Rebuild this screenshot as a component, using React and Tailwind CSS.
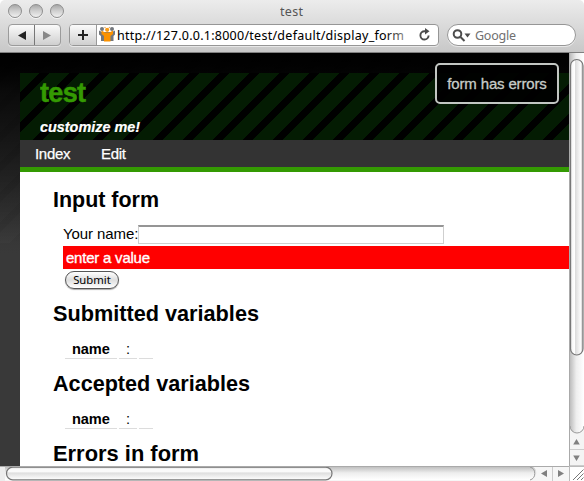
import React from "react";

const LUCIDA = "font-['Noto_Sans','Open_Sans',sans-serif]";

function TitleBar() {
  return (
    <header className={`h-[53px] shrink-0 rounded-t-[5px] border-b border-[#808080] bg-linear-to-b from-[#ececec] to-[#c8c8c8] ${LUCIDA}`}>
      <div className="flex h-6 items-center pl-2">
        <div className="flex w-14 gap-[7px] pt-px -mt-[3px]">
          {[0, 1, 2].map((i) => (
            <span key={i} className="h-[14px] w-[14px] rounded-full border border-[#8e8e8e] bg-linear-to-b from-[#a8a8a8] via-[#d0d0d0] to-[#f0f0f0] shadow-[0_1px_0_#f5f5f5]" />
          ))}
        </div>
        <svg className="ml-[216px] h-[22px] w-[40px]">
          <text x="0" y="15" fontSize="12.5" textLength="23" fill="#555">test</text>
        </svg>
      </div>
      <div className="flex h-[22px] pl-2">
        <div className="flex h-[22px] w-[53px] rounded-[4px] border border-[#9b9b9b] bg-linear-to-b from-[#fbfbfb] to-[#cfcfcf] shadow-[0_1px_0_#e8e8e8]">
          <svg width="51" height="20">
            <path d="M9 10.5 17 6v9z" fill="#222" />
            <path d="M42 10.500 34 6v9z" fill="#888" />
            <path d="M25.500 0v20" stroke="#777" />
          </svg>
        </div>
        <div className="ml-2 flex h-[22px] w-[370px] overflow-hidden rounded-[4px] border border-[#969696] bg-white shadow-[0_1px_0_#e8e8e8]">
          <div className="w-[27px] shrink-0 border-r border-[#999] bg-linear-to-b from-[#fbfbfb] to-[#cfcfcf]">
            <svg width="26" height="20">
              <path d="M8 10h10M13 5v10" stroke="#222" strokeWidth="2" />
            </svg>
          </div>
          <svg width="20" height="20" className="shrink-0">
            <g fill="#73777c">
              <circle cx="5" cy="4" r="2" />
              <circle cx="15" cy="4" r="2" />
              <path d="M2 5.500 5 7h10l3-1.500v4L16.500 11v5H4v-5L2 9.500z" />
            </g>
            <path d="M4.500 5.500 8 7.500h4.500L16 5.500v3.500L13.500 11v5.500H7V11L4.500 9z" fill="#fb9200" />
            <circle cx="10.200" cy="4.800" r="2.100" fill="#fb9a12" />
            <circle cx="8" cy="2.500" r=".8" fill="#e6b06a" />
            <circle cx="12.400" cy="2.500" r=".8" fill="#e6b06a" />
          </svg>
          <svg width="300" height="20" className="shrink-0">
            <defs>
              <linearGradient id="urlFade" gradientUnits="userSpaceOnUse" x1="268" x2="292" y1="0" y2="0">
                <stop offset="0" stopColor="#000" />
                <stop offset="1" stopColor="#aaa" />
              </linearGradient>
            </defs>
            <text x="0" y="14.500" fontSize="12.5" textLength="287" fill="url(#urlFade)">http://127.0.0.1:8000/test/default/display_form</text>
          </svg>
          <svg width="20" height="20" className="shrink-0">
            <path d="M9.600 6.300H7.500A4.100 4.100 0 1 0 11.600 10.500" fill="none" stroke="#4b4b4b" strokeWidth="1.900" />
            <path d="M8 3v6.500l4.500-3.300z" fill="#4b4b4b" />
          </svg>
        </div>
        <div className="ml-2 flex h-[22px] w-[129px] rounded-full border border-[#969696] bg-white shadow-[0_1px_0_#e8e8e8]">
          <svg width="120" height="20">
            <circle cx="9.500" cy="9" r="3.800" fill="none" stroke="#4d4d4d" strokeWidth="2" />
            <path d="m12.500 12 4 4" stroke="#4d4d4d" strokeWidth="2" />
            <path d="M16.500 8.500h6l-3 4z" fill="#4d4d4d" />
            <text x="27" y="14.500" fontSize="12.5" textLength="41" fill="#707070">Google</text>
          </svg>
        </div>
      </div>
    </header>
  );
}

function Heading({ children, width }) {
  return (
    <h2 className="h-[30px]">
      <svg width="300" height="30">
        <text x="0" y="21" fontSize="22.500" fontWeight="700" textLength={width} lengthAdjust="spacingAndGlyphs">{children}</text>
      </svg>
    </h2>
  );
}

function Variables() {
  return (
    <div className="mt-[6px] mb-[11px] ml-3 flex h-[23px] gap-[2px] text-[14.6px] leading-[26px]">
      <div className="w-[52px] border-b border-[#dcdcdc] pl-[7px] font-bold tracking-[-0.1px]">name</div>
      <div className="w-[18px] border-b border-[#dcdcdc] pl-[7px]">:</div>
      <div className="w-[14px] border-b border-[#dcdcdc]" />
    </div>
  );
}

function Page() {
  return (
    <main className="relative h-[413px] w-[569px] overflow-hidden bg-[#393939] bg-[linear-gradient(#000_0px,#000000b0_40px,#00000000_190px),repeating-linear-gradient(135deg,#ffffff04_0px,#ffffff04_14.142px,transparent_14.142px,transparent_21.213px),linear-gradient(#000_0px,#202020_40px,#2c2c2c_120px,#393939_200px)] bg-[length:100%_190px,100%_190px,100%_100%] bg-no-repeat pt-5 pl-5 font-['Liberation_Sans',Arial,sans-serif] text-black">
      <div className="h-[67px] bg-[repeating-linear-gradient(135deg,#041c03_0px,#041c03_14.142px,#000_14.142px,#000_21.213px)] pl-5">
        <svg width="150" height="67">
          <text x="0" y="29" fontSize="27" fontWeight="700" textLength="46" fill="#349a02" stroke="#349a02" strokeWidth=".5">test</text>
          <text x="0" y="59" fontSize="14.500" fontWeight="700" fontStyle="italic" textLength="100" lengthAdjust="spacingAndGlyphs" fill="#fff" stroke="#fff" strokeWidth=".2">customize me!</text>
        </svg>
      </div>
      <nav className="flex h-8 border-b-[5px] border-[#349a02] bg-[#333] pl-[15px] text-[15px] leading-[28px] text-white [-webkit-text-stroke:0.25px_white]">
        <span className="w-[66px] tracking-[-0.3px]">Index</span>
        <span className="tracking-[-0.3px]">Edit</span>
      </nav>
      <section className="h-[320px] bg-white pt-[14px] pl-[33px]">
        <Heading width="106">Input form</Heading>
        <div className="ml-[10px] pt-[9px]">
          <div className="flex h-[21px]">
            <label className="w-[75px] text-[15px] leading-[18px] tracking-[-0.08px] whitespace-nowrap">Your name:</label>
            <div className="h-[19px] w-[306px] border border-t-2 border-[#cfcfcf] border-t-[#959595] bg-white" />
          </div>
          <div className="h-[23px] bg-[#f00] pl-[3px] text-[15px] leading-[24px] tracking-[-0.22px] text-white [-webkit-text-stroke:0.35px_white]">enter a value</div>
          <button className={`mt-[2px] ml-[2px] flex h-[18px] w-[54px] items-center justify-center rounded-full border border-[#555] bg-linear-to-b from-white via-[#dedede] to-white text-[11.300px] leading-none shadow-[0_1px_1px_#aaa] ${LUCIDA}`}>Submit</button>
        </div>
        <div className="h-[11px]" />
        <Heading width="206">Submitted variables</Heading>
        <Variables />
        <Heading width="197">Accepted variables</Heading>
        <Variables />
        <Heading width="146">Errors in form</Heading>
      </section>
      <div className="absolute top-[10px] left-[435px] flex h-[41px] w-[124px] items-center justify-center rounded-[5px] border-2 border-[#c2c6c2] bg-black/90 pt-[2px] text-[15px] tracking-[-0.16px] whitespace-nowrap text-[#c8ccc8] [-webkit-text-stroke:0.3px_#c8ccc8]">form has errors</div>
    </main>
  );
}

function VerticalScrollbar() {
  return (
    <svg width="15" height="413" className="shrink-0">
      <defs>
        <linearGradient id="vTrack">
          <stop offset="0" stopColor="#bdbdbd" />
          <stop offset=".45" stopColor="#eee" />
          <stop offset="1" stopColor="#fff" />
        </linearGradient>
        <linearGradient id="vThumb">
          <stop offset="0" stopColor="#c8c8c8" />
          <stop offset=".12" stopColor="#f7f7f7" />
          <stop offset=".35" stopColor="#fff" />
          <stop offset=".4" stopColor="#ddd" />
          <stop offset=".8" stopColor="#fafafa" />
          <stop offset="1" stopColor="#bbb" />
        </linearGradient>
      </defs>
      <rect width="15" height="413" fill="#f4f4f4" />
      <path d="M1 0h14v373a7 7 0 0 1-14 0z" fill="url(#vTrack)" />
      <path d="M1 373a7 7 0 0 0 14 0" fill="none" stroke="#999" />
      <rect x="1.500" y="6.500" width="12.500" height="295.500" rx="6.200" fill="url(#vThumb)" stroke="#777" strokeWidth="1.200" />
      <path d="M.5 0v413" stroke="#aaa" />
      <path d="M1 396.500h14M1 412.500h14" stroke="#ccc" />
      <path d="m7.500 386 3.300 5.500H4.200zM7.500 408l3.300-5.500H4.200z" fill="#808080" />
    </svg>
  );
}

function HorizontalScrollbar() {
  return (
    <svg width="584" height="15" className="block shrink-0">
      <defs>
        <linearGradient id="hTrack" x2="0" y2="1">
          <stop offset="0" stopColor="#b8b8b8" />
          <stop offset=".5" stopColor="#eee" />
          <stop offset="1" stopColor="#fff" />
        </linearGradient>
        <linearGradient id="hThumb" x2="0" y2="1">
          <stop offset="0" stopColor="#dcdcdc" />
          <stop offset=".15" stopColor="#fafafa" />
          <stop offset=".38" stopColor="#fafafa" />
          <stop offset=".45" stopColor="#dedede" />
          <stop offset="1" stopColor="#fff" />
        </linearGradient>
      </defs>
      <rect width="584" height="15" fill="#f6f6f6" />
      <path d="M2 0h527.500a7 7 0 0 1 0 14H2z" fill="url(#hTrack)" />
      <path d="M530 1a6.800 6.800 0 0 1 0 13" fill="none" stroke="#999" />
      <path d="M0 0h5v15H0z" fill="#ededed" />
      <rect x="6.500" y="1.200" width="325.500" height="12.600" rx="6.300" fill="url(#hThumb)" stroke="#777" strokeWidth="1.200" />
      <path d="M0 .5h569" stroke="#aaa" />
      <path d="M552.500 1v14" stroke="#ccc" />
      <path d="m541 7.500 6-3.500v7zM564 7.500 558 4v7z" fill="#808080" />
      <path d="M569 0h15v15h-15z" fill="#fff" />
      <path d="M569.500 0v15M569 .5h15" stroke="#bbb" />
      <path d="m573 14 10.500-10.500M577 14l6.500-6.500M581 14l2.500-2.500" stroke="#777" />
    </svg>
  );
}

export default function App() {
  return (
    <div className="flex h-[481px] w-[584px] flex-col overflow-hidden bg-white">
      <TitleBar />
      <div className="flex h-[413px]">
        <Page />
        <VerticalScrollbar />
      </div>
      <HorizontalScrollbar />
    </div>
  );
}
